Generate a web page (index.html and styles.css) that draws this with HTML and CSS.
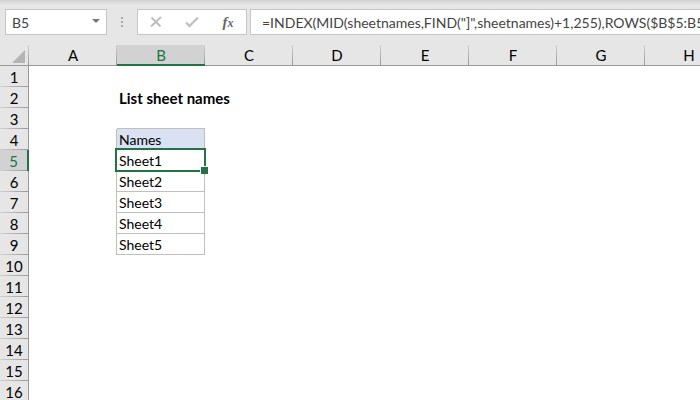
FILE: index.html
```
<!DOCTYPE html>
<html lang="en">
<head>
  <meta charset="UTF-8">
  <title>List sheet names</title>
  <link rel="stylesheet" href="styles.css">
</head>
<body>
  <div class="formula-bar">
    <div class="name-box">
      <input type="text" class="name-input" aria-label="Name box" value="B5">
      <button type="button" class="name-toggle" aria-label="Show names">
        <svg width="8" height="4" viewBox="0 0 8 4"><path d="M0 0h8L4 4z" fill="#777"/></svg>
      </button>
    </div>
    <div class="grip"><i></i><i></i><i></i></div>
    <div class="actions">
      <button type="button" aria-label="Cancel">
        <svg width="12" height="12" viewBox="0 0 12 12"><path d="M1.500 1.500l9 9M11 1L1 10.500" fill="none" stroke="#bcbcbc" stroke-width="1.800"/></svg>
      </button>
      <button type="button" aria-label="Enter">
        <svg width="14" height="12" viewBox="0 0 14 12"><path d="M1 6.500l3.500 3.500L13 1.500" fill="none" stroke="#c2c2c2" stroke-width="2.400"/></svg>
      </button>
      <button type="button" class="fx" aria-label="Insert function"><span>f</span><small>x</small></button>
    </div>
    <input type="text" class="formula-input" aria-label="Formula" value="=INDEX(MID(sheetnames,FIND(&quot;]&quot;,sheetnames)+1,255),ROWS($B$5:B5))">
  </div>

  <div class="sheet">
    <table class="grid">
      <colgroup>
        <col class="col-head">
        <col span="8" class="col">
      </colgroup>
      <thead>
        <tr>
          <th class="corner"><svg width="13" height="13" viewBox="0 0 13 13"><path d="M13 0v13H0z" fill="#b4b4b4"/></svg></th>
          <th>A</th>
          <th class="active">B</th>
          <th>C</th>
          <th>D</th>
          <th>E</th>
          <th>F</th>
          <th>G</th>
          <th>H</th>
        </tr>
      </thead>
      <tbody>
        <tr><th>1</th><td></td><td></td><td colspan="6"></td></tr>
        <tr><th>2</th><td></td><td class="title" colspan="2">List sheet names</td><td colspan="5"></td></tr>
        <tr><th>3</th><td></td><td class="above"></td><td colspan="6"></td></tr>
        <tr><th>4</th><td class="before"></td><td class="cell label">Names</td><td colspan="6"></td></tr>
        <tr><th class="active">5</th><td class="before"></td><td class="cell selected">Sheet1</td><td colspan="6"></td></tr>
        <tr><th>6</th><td class="before"></td><td class="cell">Sheet2</td><td colspan="6"></td></tr>
        <tr><th>7</th><td class="before"></td><td class="cell">Sheet3</td><td colspan="6"></td></tr>
        <tr><th>8</th><td class="before"></td><td class="cell">Sheet4</td><td colspan="6"></td></tr>
        <tr><th>9</th><td class="before"></td><td class="cell">Sheet5</td><td colspan="6"></td></tr>
        <tr><th>10</th><td></td><td></td><td colspan="6"></td></tr>
        <tr><th>11</th><td></td><td></td><td colspan="6"></td></tr>
        <tr><th>12</th><td></td><td></td><td colspan="6"></td></tr>
        <tr><th>13</th><td></td><td></td><td colspan="6"></td></tr>
        <tr><th>14</th><td></td><td></td><td colspan="6"></td></tr>
        <tr><th>15</th><td></td><td></td><td colspan="6"></td></tr>
        <tr><th>16</th><td></td><td></td><td colspan="6"></td></tr>
      </tbody>
    </table>
  </div>
</body>
</html>
```
FILE: styles.css
```
* {
  box-sizing: border-box;
}

body {
  margin: 0;
  height: 100vh;
  display: flex;
  flex-direction: column;
  overflow: hidden;
  background: #fff;
  color: #000;
  font-family: Lato, "Liberation Sans", sans-serif;
  font-size: 14px;
}

button,
input {
  margin: 0;
  padding: 0;
  border: none;
  background: none;
  color: #444;
  font: inherit;
}

input:focus {
  outline: none;
}

/* formula bar */

.formula-bar {
  display: flex;
  flex: none;
  padding: 9px 0 10px 5px;
  background: linear-gradient(#d2d2d2, #e6e6e6 5px);
}

.name-box,
.actions,
.formula-input {
  height: 26px;
  border: 1px solid #c6c6c6;
  background: #fff;
}

.name-box {
  display: flex;
  width: 102px;
}

.name-input {
  flex: 1;
  min-width: 0;
  padding-left: 6px;
}

.name-toggle {
  display: flex;
  align-items: center;
  justify-content: center;
  width: 20px;
  padding-bottom: 2px;
}

.grip {
  display: flex;
  flex-direction: column;
  align-items: center;
  justify-content: center;
  gap: 2px;
  width: 30px;
}

.grip i {
  width: 2px;
  height: 2px;
  background: #a8a8a8;
}

.actions {
  display: flex;
  width: 110px;
  margin-right: 3px;
}

.actions button {
  display: flex;
  flex: 1;
  align-items: center;
  justify-content: center;
}

.actions .fx {
  align-items: baseline;
  color: #666;
  font: italic bold 15px/24px "Liberation Serif", serif;
}

.fx small {
  font-size: 12px;
}

.formula-input {
  flex: 1;
  min-width: 0;
  padding-left: 11px;
  border-right: none;
}

/* sheet */

.sheet {
  flex: 1;
  overflow: hidden;
}

.grid {
  width: 733px;
  border-spacing: 0;
  table-layout: fixed;
}

.col-head {
  width: 29px;
}

.col {
  width: 88px;
}

th,
td {
  height: 21px;
  padding: 0;
  line-height: 20px;
  white-space: nowrap;
}

th {
  border-bottom: 1px solid #999;
  background: linear-gradient(#d0d0d0, #999) right / 1px 100% no-repeat #e6e6e6;
  font-size: 15px;
  font-weight: normal;
  text-align: center;
}

thead .active {
  padding-top: 1px;
  border-bottom: 2px solid #217346;
  background-color: #d2d2d2;
  color: #217346;
  line-height: 18px;
}

.corner svg {
  display: block;
  margin: 3px 0 0 12px;
}

tbody th {
  border-right: 1px solid #999;
  border-bottom: none;
  background: linear-gradient(to right, #d0d0d0, #999) bottom / 100% 1px no-repeat #e6e6e6;
}

tbody .active {
  border-right: 2px solid #217346;
  background-color: #d2d2d2;
  color: #217346;
}

td {
  padding: 2px 0 0 2px;
  line-height: 18px;
}

.title {
  padding-top: 0;
  font-size: 15px;
  font-weight: bold;
}

.above {
  border-bottom: 1px solid #bfbfbf;
}

.before {
  border-right: 1px solid #bfbfbf;
}

.cell {
  border-right: 1px solid #bfbfbf;
  border-bottom: 1px solid #bfbfbf;
}

.label {
  background: #d9e1f2;
}

.selected {
  position: relative;
}

/* selection frame and fill handle lie over the cell borders */
.selected::before {
  content: "";
  position: absolute;
  inset: -2px;
  border: 2px solid #217346;
}

.selected::after {
  content: "";
  position: absolute;
  right: -4px;
  bottom: -4px;
  width: 7px;
  height: 7px;
  border: solid #fff;
  border-width: 1px 0 0 1px;
  background: #217346;
}
```
